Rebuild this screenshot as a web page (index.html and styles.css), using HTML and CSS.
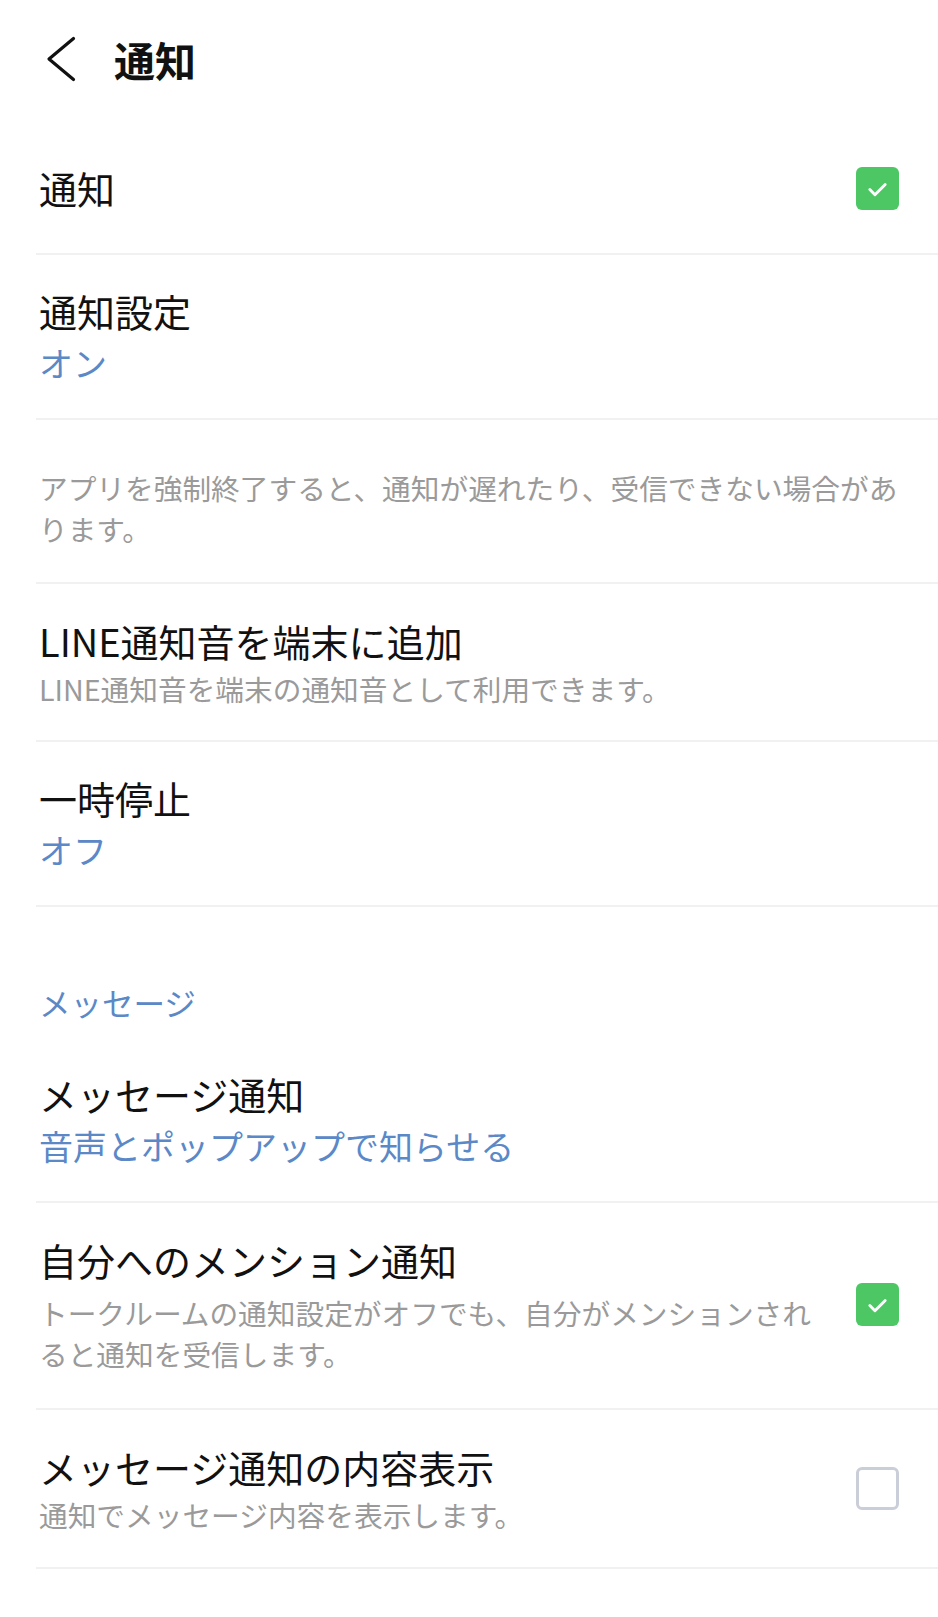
FILE: index.html
```
<!DOCTYPE html>
<html>
	<head>
		<meta charset="utf-8">
		<title>通知</title>
		<link rel="stylesheet" href="styles.css">
	</head>
	<body>
		<div class="header">
			<span class="back">
				<svg width="30" height="46" viewBox="0 0 30 46"><path d="M27.5 2.5 L3 23 L27.5 43.5" fill="none" stroke="#111" stroke-width="3.2" stroke-linecap="round" stroke-linejoin="round"/></svg>
			</span>
			<h1 class="title">通知</h1>
		</div>

		<div class="row row-first">
			<div class="text">
				<p class="name">通知</p>
			</div>
			<span class="check on"><svg width="43" height="43" viewBox="0 0 42 42"><path d="M13.5 22 L18.5 27 L28.5 17" fill="none" stroke="#fff" stroke-width="2.8" stroke-linecap="round" stroke-linejoin="round"/></svg></span>
		</div>

		<div class="row">
			<div class="text">
				<p class="name">通知設定</p>
				<p class="value">オン</p>
			</div>
		</div>

		<div class="row note">
			<p class="desc">アプリを強制終了すると、通知が遅れたり、受信できない場合があります。</p>
		</div>

		<div class="row row-sub">
			<div class="text">
				<p class="name">LINE通知音を端末に追加</p>
				<p class="desc">LINE通知音を端末の通知音として利用できます。</p>
			</div>
		</div>

		<div class="row">
			<div class="text">
				<p class="name">一時停止</p>
				<p class="value">オフ</p>
			</div>
		</div>

		<h2 class="section">メッセージ</h2>

		<div class="row">
			<div class="text">
				<p class="name">メッセージ通知</p>
				<p class="value">音声とポップアップで知らせる</p>
			</div>
		</div>

		<div class="row row-sub row-mention">
			<div class="text">
				<p class="name">自分へのメンション通知</p>
				<p class="desc desc-wide">トークルームの通知設定がオフでも、自分がメンションされると通知を受信します。</p>
			</div>
			<span class="check on"><svg width="43" height="43" viewBox="0 0 42 42"><path d="M13.5 22 L18.5 27 L28.5 17" fill="none" stroke="#fff" stroke-width="2.8" stroke-linecap="round" stroke-linejoin="round"/></svg></span>
		</div>

		<div class="row row-sub">
			<div class="text">
				<p class="name">メッセージ通知の内容表示</p>
				<p class="desc">通知でメッセージ内容を表示します。</p>
			</div>
			<span class="check off"></span>
		</div>
	</body>
</html>
```

FILE: styles.css
```
*{margin:0;padding:0;box-sizing:border-box;}
body{
	background:#fff;
	color:#111;
	font-family:"Noto Sans CJK JP","Noto Sans",sans-serif;
}
.header{
	height:118px;
	display:flex;
	align-items:center;
	padding-left:46px;
}
.header .back{display:flex;width:30px;height:46px;}
.header .title{
	margin-left:38px;
	font-size:41px;
	font-weight:bold;
	line-height:52px;
}
.row{
	display:flex;
	align-items:center;
	margin-left:36px;
	padding:30px 39px 29px 3px;
	border-bottom:2px solid #f1f1f1;
}
.row-first{padding-top:44px;padding-bottom:39px;}
.row-sub{padding-top:31px;padding-bottom:31px;}
.row-mention{padding-bottom:34px;}
.row .text{flex:1;min-width:0;}
.name{font-size:38px;line-height:52px;}
.value{font-size:34px;line-height:52px;color:#5b88c7;}
.desc{font-size:28.7px;line-height:41.3px;color:#9a9a9a;margin-top:1px;}
.desc-wide{margin-top:6px;}
.note{padding:47px 20px 32px 3px;}
.note .desc{margin-top:0;}
.section{
	font-size:31.5px;
	font-weight:normal;
	line-height:44px;
	color:#5b88c7;
	padding:73px 0 14px 39px;
}
.check{
	flex:none;
	width:43px;
	height:43px;
	margin-left:25px;
	border-radius:6px;
}
.check.on{background:#4cc764;}
.check.on svg{display:block;}
.check.off{border:3px solid #caced8;}
```
